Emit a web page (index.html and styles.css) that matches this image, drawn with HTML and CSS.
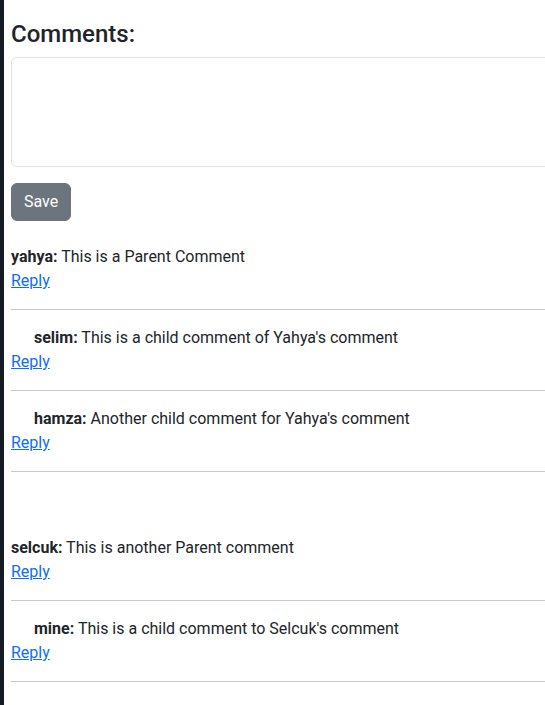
FILE: index.html
```html
<!DOCTYPE html>
<html lang="en">
<head>
<meta charset="utf-8">
<title>Comments</title>
<link rel="stylesheet" href="styles.css">
</head>
<body>
<main class="page">
  <h3 class="title">Comments:</h3>
  <form class="comment-form">
    <textarea class="comment-input" rows="4"></textarea>
    <button type="button" class="btn-save">Save</button>
  </form>

  <section class="thread">
    <div class="comment">
      <div class="comment-text"><b>yahya:</b> This is a Parent Comment</div>
      <a href="#" class="reply">Reply</a>
      <hr class="sep">
    </div>
    <div class="comment child">
      <div class="comment-text"><b>selim:</b> This is a child comment of Yahya's comment</div>
      <a href="#" class="reply">Reply</a>
      <hr class="sep">
    </div>
    <div class="comment child">
      <div class="comment-text"><b>hamza:</b> Another child comment for Yahya's comment</div>
      <a href="#" class="reply">Reply</a>
      <hr class="sep">
    </div>
  </section>

  <section class="thread">
    <div class="comment">
      <div class="comment-text"><b>selcuk:</b> This is another Parent comment</div>
      <a href="#" class="reply">Reply</a>
      <hr class="sep">
    </div>
    <div class="comment child">
      <div class="comment-text"><b>mine:</b> This is a child comment to Selcuk's comment</div>
      <a href="#" class="reply">Reply</a>
      <hr class="sep">
    </div>
  </section>
</main>
</body>
</html>
```
FILE: styles.css
```css
html, body {
  margin: 0;
  padding: 0;
  overflow: hidden;
}
body {
  background: #ffffff;
  border-left: 4px solid #141b22;
  min-height: 705px;
  box-sizing: border-box;
  font-family: Roboto, "Liberation Sans", sans-serif;
  font-size: 16px;
  line-height: 24px;
  color: #212529;
}
.page {
  width: 580px;
  padding: 20px 0 0 7px;
}
.title {
  margin: 0 0 8px;
  font-size: 24px;
  line-height: 29px;
  font-weight: 500;
  color: #212529;
}
.comment-form {
  display: flex;
  flex-direction: column;
  align-items: flex-start;
  gap: 16px;
  margin-bottom: 24px;
}
.comment-input {
  display: block;
  width: 100%;
  height: 110px;
  box-sizing: border-box;
  border: 1px solid #dee2e6;
  border-radius: 6px;
  padding: 6px 12px;
  font: inherit;
  resize: none;
  background: #fff;
}
.btn-save {
  height: 38px;
  padding: 6px 12px;
  border: 1px solid #6c757d;
  border-radius: 6px;
  background: #6c757d;
  color: #ffffff;
  font-family: inherit;
  font-size: 16px;
  line-height: 24px;
}
.thread + .thread {
  margin-top: 48px;
}
.comment {
  display: flex;
  flex-direction: column;
  align-items: flex-start;
}
.comment-text b {
  font-weight: 700;
}
.child .comment-text {
  padding-left: 23px;
}
.reply {
  color: #0d6efd;
  text-decoration: underline;
}
.sep {
  align-self: stretch;
  margin: 16px 0;
  border: 0;
  border-top: 1px solid #c8c9ca;
  height: 0;
}
```
